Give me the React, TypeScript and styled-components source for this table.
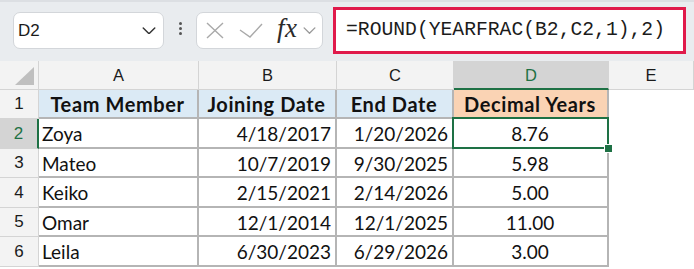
import React from 'react';
import styled, { createGlobalStyle, css } from 'styled-components';

const GlobalStyle = createGlobalStyle`
    html, body {
        margin: 0;
        padding: 0;
        background: #ffffff;
    }
    body {
        font-family: "Liberation Sans", Arial, sans-serif;
    }
`;

const GREEN = '#1e7145';
const GRID = '#b5b5b5';
const HEAD_LINE = '#d4d4d4';

const Page = styled.div`
    width: 694px;
    height: 269px;
    overflow: hidden;
    background: #ffffff;
`;

const FormulaBar = styled.div`
    height: 61px;
    box-sizing: border-box;
    display: flex;
    align-items: flex-start;
    padding: 5px 0 0 13px;
    background: #e9ecef;
    border-top: 2px solid #dcdfe3;
`;

const Box = styled.div`
    margin-top: 5px;
    height: 37px;
    box-sizing: border-box;
    background: #ffffff;
    border: 1px solid #d3d6da;
    border-radius: 7px;
    display: flex;
    align-items: center;
`;

const NameBox = styled(Box)`
    width: 151px;
    padding: 0 7px 0 4px;
    justify-content: space-between;
    font-size: 17px;
    color: #1b1b1b;
`;

const Dots = styled.div`
    width: 32px;
    align-self: stretch;
    display: flex;
    flex-direction: column;
    align-items: center;
    justify-content: center;
    gap: 2px;
    padding-bottom: 12px;
    box-sizing: border-box;

    span {
        width: 3px;
        height: 3px;
        border-radius: 50%;
        background: #555555;
    }
`;

const FxBox = styled(Box)`
    width: 127px;
    padding-left: 9px;
`;

const Fx = styled.span`
    font-family: "Liberation Serif", "Times New Roman", serif;
    font-style: italic;
    font-size: 27px;
    color: #2b2b2b;
    margin: -5px 5px 0 14px;
    letter-spacing: 0.5px;
`;

const FormulaInput = styled.div`
    margin-left: 10px;
    width: 353px;
    height: 47px;
    box-sizing: border-box;
    border: 3px solid #e01a4b;
    background: #ffffff;
    display: flex;
    align-items: center;
    padding: 0 0 2px 10px;
    font-family: "Liberation Mono", "Courier New", monospace;
    font-size: 19.7px;
    color: #1b1b1b;
    white-space: nowrap;
`;

const Sheet = styled.div`
    display: grid;
    grid-template-columns: 39px 160px 138px 117px 155px 1fr;
    grid-template-rows: 28.5px repeat(6, 29.5px);
`;

const Corner = styled.div`
    background: #f3f3f3;
    border-right: 1px solid ${HEAD_LINE};
    border-bottom: 1px solid ${HEAD_LINE};
    box-sizing: border-box;
    position: relative;

    &::after {
        content: '';
        position: absolute;
        right: 4px;
        bottom: 4px;
        width: 0;
        height: 0;
        border-left: 19px solid transparent;
        border-bottom: 18px solid #bfbfbf;
    }
`;

const ColHead = styled.div<{ $active?: boolean }>`
    box-sizing: border-box;
    display: flex;
    align-items: center;
    justify-content: center;
    font-size: 16.5px;
    padding-top: 2px;
    color: #1b1b1b;
    background: #f3f3f3;
    border-right: 1px solid ${HEAD_LINE};
    border-bottom: 1px solid ${HEAD_LINE};

    ${p => p.$active && css`
        background: #d4d4d4;
        color: ${GREEN};
        border-bottom: 2px solid ${GREEN};
    `}
`;

const RowHead = styled.div<{ $active?: boolean }>`
    box-sizing: border-box;
    display: flex;
    align-items: center;
    justify-content: center;
    font-size: 17px;
    padding-top: 1px;
    color: #1b1b1b;
    background: #f3f3f3;
    border-right: 1px solid ${HEAD_LINE};
    border-bottom: 1px solid ${HEAD_LINE};

    ${p => p.$active && css`
        background: #d4d4d4;
        color: ${GREEN};
        border-right: 2px solid ${GREEN};
    `}
`;

type Align = 'left' | 'right' | 'center';

const justifyFor = (a: Align) => (a === 'left' ? 'flex-start' : a === 'right' ? 'flex-end' : 'center');

const Cell = styled.div<{ $align: Align; $bg?: string; $bold?: boolean }>`
    box-sizing: border-box;
    position: relative;
    display: flex;
    align-items: center;
    justify-content: ${p => justifyFor(p.$align)};
    padding: 2px 4px 0 3px;
    font-family: Lato, "Liberation Sans", sans-serif;
    font-size: ${p => (p.$bold ? '20px' : '19px')};
    font-weight: ${p => (p.$bold ? 700 : 400)};
    letter-spacing: ${p => (p.$bold ? '0.6px' : '0')};
    color: #111111;
    background: ${p => p.$bg || '#ffffff'};
    border-right: 2px solid ${GRID};
    border-bottom: 2px solid ${GRID};
    white-space: nowrap;
`;

const EmptyCell = styled.div`
    background: #ffffff;
`;

const Selection = styled.div`
    position: absolute;
    z-index: 2;
    left: -2px;
    top: -2px;
    right: -2px;
    bottom: -2px;
    border: 2px solid ${GREEN};
    pointer-events: none;

    &::after {
        content: '';
        position: absolute;
        right: -6px;
        bottom: -6px;
        width: 7px;
        height: 7px;
        background: ${GREEN};
        border: 1px solid #ffffff;
    }
`;

const Chevron = ({ color, size }: { color: string; size: number }) => (
    <svg width={size} height={size * 0.55} viewBox="0 0 14 8" fill="none">
        <path d="M1 1l6 6 6-6" stroke={color} strokeWidth="1.5" strokeLinecap="round" strokeLinejoin="round" />
    </svg>
);

const CancelIcon = () => (
    <svg width="18" height="17" viewBox="0 0 18 17" fill="none">
        <path d="M1 1l16 15M17 1L1 16" stroke="#a9a9a9" strokeWidth="1.4" />
    </svg>
);

const EnterIcon = () => (
    <svg width="24" height="15" viewBox="0 0 24 15" fill="none" style={{ marginLeft: 15 }}>
        <path d="M1 7l10 7L23 1" stroke="#a9a9a9" strokeWidth="1.4" />
    </svg>
);

const columns = ['A', 'B', 'C', 'D', 'E'];

const headers = [
    { text: 'Team Member', bg: '#dbeaf5' },
    { text: 'Joining Date', bg: '#dbeaf5' },
    { text: 'End Date', bg: '#dbeaf5' },
    { text: 'Decimal Years', bg: '#fad3b4' },
];

const rows = [
    ['Zoya', '4/18/2017', '1/20/2026', '8.76'],
    ['Mateo', '10/7/2019', '9/30/2025', '5.98'],
    ['Keiko', '2/15/2021', '2/14/2026', '5.00'],
    ['Omar', '12/1/2014', '12/1/2025', '11.00'],
    ['Leila', '6/30/2023', '6/29/2026', '3.00'],
];

const aligns: Align[] = ['left', 'right', 'right', 'center'];

const App = () => {
    return (
        <Page>
            <GlobalStyle />
            <FormulaBar>
                <NameBox>
                    <span>D2</span>
                    <Chevron color="#333333" size={14} />
                </NameBox>
                <Dots>
                    <span />
                    <span />
                    <span />
                </Dots>
                <FxBox>
                    <CancelIcon />
                    <EnterIcon />
                    <Fx>fx</Fx>
                    <Chevron color="#9a9a9a" size={13} />
                </FxBox>
                <FormulaInput>=ROUND(YEARFRAC(B2,C2,1),2)</FormulaInput>
            </FormulaBar>
            <Sheet>
                <Corner />
                {columns.map(c => (
                    <ColHead key={c} $active={c === 'D'}>{c}</ColHead>
                ))}

                <RowHead>1</RowHead>
                {headers.map(h => (
                    <Cell key={h.text} $align="center" $bg={h.bg} $bold>{h.text}</Cell>
                ))}
                <EmptyCell />

                {rows.map((r, i) => (
                    <React.Fragment key={r[0]}>
                        <RowHead $active={i === 0}>{i + 2}</RowHead>
                        {r.map((v, j) => (
                            <Cell key={j} $align={aligns[j]}>
                                {v}
                                {i === 0 && j === 3 && <Selection />}
                            </Cell>
                        ))}
                        <EmptyCell />
                    </React.Fragment>
                ))}
            </Sheet>
        </Page>
    );
};

export default App;
